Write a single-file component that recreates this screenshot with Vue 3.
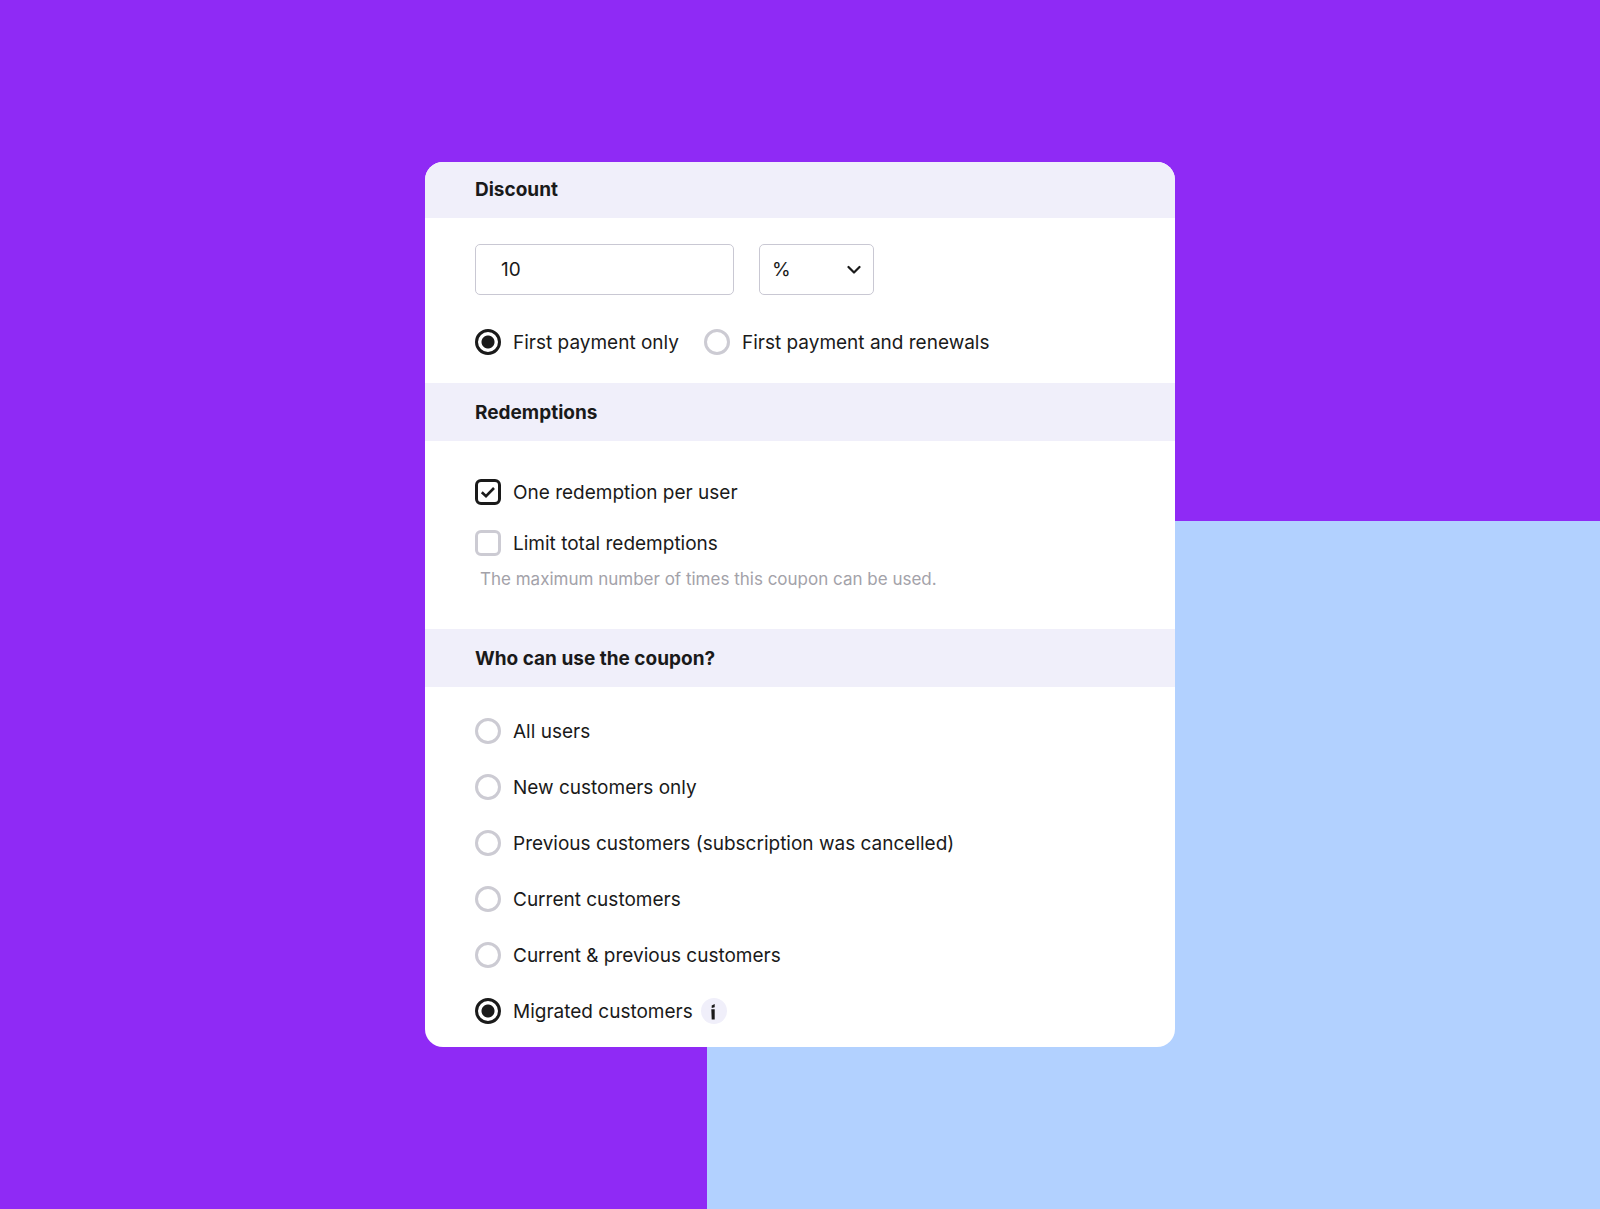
<script setup>
import { ref } from 'vue'

const amount = ref('10')
const unit = ref('%')
const duration = ref('first')
const onePerUser = ref(true)
const limitTotal = ref(false)
const audience = ref('migrated')

const durations = [
  { value: 'first', label: 'First payment only' },
  { value: 'renewals', label: 'First payment and renewals' },
]

const audiences = [
  { value: 'all', label: 'All users' },
  { value: 'new', label: 'New customers only' },
  { value: 'previous', label: 'Previous customers (subscription was cancelled)' },
  { value: 'current', label: 'Current customers' },
  { value: 'both', label: 'Current & previous customers' },
  { value: 'migrated', label: 'Migrated customers' },
]
</script>

<template>
  <main class="page">
    <form class="card" @submit.prevent>
      <section>
        <h2 id="discount-title" class="title title-first">Discount</h2>
        <div class="body discount">
          <div class="fields">
            <input v-model="amount" class="field amount" type="text" inputmode="numeric" aria-labelledby="discount-title" />
            <div class="select-wrap">
              <select v-model="unit" class="field unit" aria-label="Discount unit">
                <option>%</option>
                <option>$</option>
              </select>
              <svg class="chevron" viewBox="0 0 14 10" aria-hidden="true">
                <path d="M1.5 2 7 7.5 12.5 2" />
              </svg>
            </div>
          </div>
          <div class="durations" role="radiogroup" aria-labelledby="discount-title">
            <label v-for="d in durations" :key="d.value" class="choice">
              <input v-model="duration" class="control radio" type="radio" name="duration" :value="d.value" />
              <span>{{ d.label }}</span>
            </label>
          </div>
        </div>
      </section>

      <section>
        <h2 class="title">Redemptions</h2>
        <div class="body redemptions">
          <label class="choice">
            <input v-model="onePerUser" class="control checkbox" type="checkbox" />
            <span>One redemption per user</span>
          </label>
          <label class="choice">
            <input v-model="limitTotal" class="control checkbox" type="checkbox" aria-describedby="limit-hint" />
            <span>Limit total redemptions</span>
          </label>
          <p id="limit-hint" class="hint">The maximum number of times this coupon can be used.</p>
        </div>
      </section>

      <section>
        <h2 id="audience-title" class="title">Who can use the coupon?</h2>
        <div class="body audiences" role="radiogroup" aria-labelledby="audience-title">
          <div v-for="a in audiences" :key="a.value" class="audience">
            <label class="choice">
              <input v-model="audience" class="control radio" type="radio" name="audience" :value="a.value" />
              <span>{{ a.label }}</span>
            </label>
            <button v-if="a.value === 'migrated'" class="info" type="button" aria-label="About migrated customers">
              <svg viewBox="0 0 26 26" aria-hidden="true">
                <path d="M10.3 11.2h3.4V21.5h-3zM10.7 7.6l3-1.6v3.2l-3 .8z" />
              </svg>
            </button>
          </div>
        </div>
      </section>
    </form>
  </main>
</template>

<style>
body {
  margin: 0;
}
</style>

<style scoped>
.page {
  position: relative;
  box-sizing: border-box;
  min-height: 100vh;
  padding: 24px;
  display: flex;
  align-items: center;
  justify-content: center;
  background: #8f2af5;
  font-family: Inter, "Liberation Sans", sans-serif;
  font-size: 19px;
  line-height: 26px;
  color: #1a1a1a;
}

.page::before {
  content: "";
  position: absolute;
  top: 43.1%;
  right: 0;
  bottom: 0;
  left: 44.2%;
  background: #b2d1ff;
}

.card {
  position: relative;
  width: 100%;
  max-width: 750px;
  border-radius: 18px;
  overflow: hidden;
  background: #fff;
}

.title {
  margin: 0;
  padding: 17px 50px 15px;
  font-size: 19px;
  font-weight: 700;
  line-height: 26px;
  background: #f0effa;
}

.title-first {
  padding: 15px 50px;
}

.body {
  display: flex;
  flex-direction: column;
  padding: 0 50px;
}

.discount {
  gap: 33px;
  padding-top: 26px;
  padding-bottom: 27px;
}

.fields,
.durations {
  display: flex;
  flex-wrap: wrap;
  gap: 25px;
}

.field {
  box-sizing: border-box;
  height: 51px;
  border: 1px solid #c9c8d3;
  border-radius: 5px;
  background: #fff;
  font: inherit;
  color: inherit;
}

.amount {
  width: 259px;
  padding: 0 25px;
}

.select-wrap {
  position: relative;
  display: flex;
}

.unit {
  width: 115px;
  padding: 0 12px;
  appearance: none;
}

.chevron {
  position: absolute;
  top: 21px;
  right: 13px;
  width: 14px;
  height: 10px;
  pointer-events: none;
  fill: none;
  stroke: #1a1a1a;
  stroke-width: 2.2;
  stroke-linecap: round;
  stroke-linejoin: round;
}

.choice {
  display: flex;
  align-items: center;
  gap: 12px;
}

.choice span {
  padding-top: 2px;
}

.control {
  box-sizing: border-box;
  flex: none;
  width: 26px;
  height: 26px;
  margin: 0;
  border: 3px solid #cccbd3;
  appearance: none;
  background: #fff center no-repeat;
}

.radio {
  border-radius: 50%;
}

.radio:checked {
  border-color: #1a1a1a;
  background-image: radial-gradient(circle, #1a1a1a 6px, #fff 7px);
}

.checkbox {
  border-radius: 6px;
}

.checkbox:checked {
  border-color: #1a1a1a;
  background-image: url("data:image/svg+xml,%3Csvg xmlns='http://www.w3.org/2000/svg' width='16' height='14' fill='none' stroke='%231a1a1a' stroke-width='2.6'%3E%3Cpath d='M1.8 7.2 6 11.2 14 3'/%3E%3C/svg%3E");
}

.redemptions {
  gap: 23px;
  padding-top: 37px;
  padding-bottom: 37px;
}

.hint {
  margin: -14px 0 0 5px;
  font-size: 17px;
  color: #a3a2a9;
}

.audiences {
  gap: 28px;
  padding-top: 30px;
  padding-bottom: 22px;
}

.audience {
  display: flex;
  align-items: center;
  gap: 8px;
}

.info {
  width: 26px;
  height: 26px;
  padding: 0;
  border: 0;
  border-radius: 50%;
  background: #f0effa;
}

.info svg {
  display: block;
  fill: #1a1a1a;
}
</style>
